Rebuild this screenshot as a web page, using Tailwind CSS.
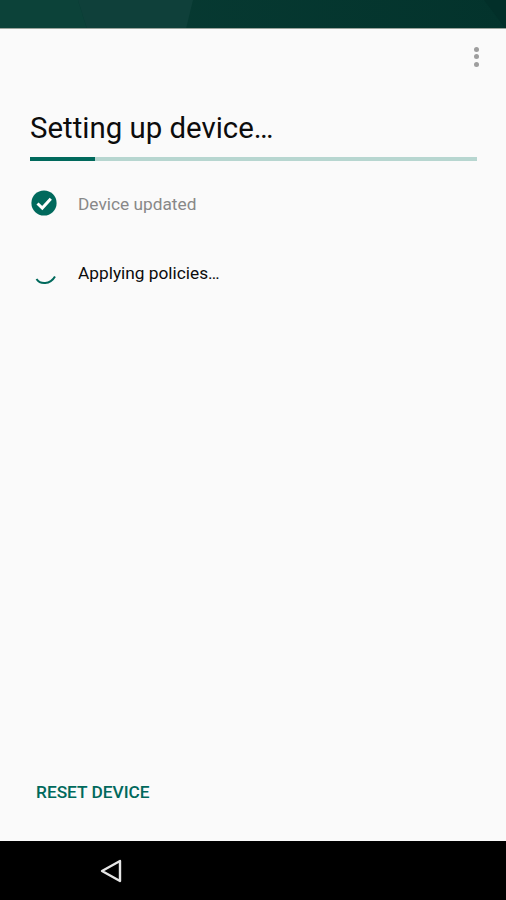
<!DOCTYPE html>
<html>
<head>
<meta charset="utf-8">
<script src="https://cdn.jsdelivr.net/npm/@tailwindcss/browser@4"></script>
</head>
<body class="m-0 bg-[#fafafa]">
<div class="w-[506px] h-[900px] flex flex-col font-['Roboto',sans-serif] overflow-hidden">
  <div class="h-[29px] shrink-0 relative overflow-hidden bg-[#063a33] border-b border-[#9aa39c]">
    <svg class="absolute inset-0" width="506" height="29" viewBox="0 0 506 29" preserveAspectRatio="none">
      <defs><linearGradient id="g" x1="0" x2="1" y1="0" y2="0"><stop offset="0" stop-color="#083c34"/><stop offset="1" stop-color="#03332c"/></linearGradient></defs>
      <rect width="506" height="29" fill="url(#g)"/>
      <polygon points="0,0 78,0 87,29 0,29" fill="#0c4239"/>
      <polygon points="78,0 193,0 186,29 87,29" fill="#0f403a"/>
      <polygon points="484,0 506,0 506,29" fill="#022f29"/>
    </svg>
  </div>
  <div class="flex-1 flex flex-col bg-[#fafafa] relative">
    <div class="absolute left-[474px] top-[18px] flex flex-col gap-[2.4px]">
      <span class="block w-[5px] h-[5px] rounded-full bg-[#9e9e9e]"></span>
      <span class="block w-[5px] h-[5px] rounded-full bg-[#9e9e9e]"></span>
      <span class="block w-[5px] h-[5px] rounded-full bg-[#9e9e9e]"></span>
    </div>
    <div class="pl-[30px] pr-[30px] pt-[81px]">
      <h1 class="text-[29.4px] leading-[36px] font-normal text-[#0c0c0c] m-0">Setting up device…</h1>
      <div class="mt-[11px] h-1 bg-[#b7d6d0] w-[447px]"><div class="h-1 w-[65px] bg-[#00695c]"></div></div>
    </div>
    <div class="pl-[30px] mt-[28px] flex items-center h-[28px]">
      <svg width="28" height="28" viewBox="0 0 28 28" class="shrink-0">
        <circle cx="14" cy="14" r="12.6" fill="#00695c"/>
        <path d="M7.5 14.5l4.8 4.6L20.8 9.8" fill="none" stroke="#fff" stroke-width="3"/>
      </svg>
      <span class="ml-[20px] mt-[2px] text-[17.3px] leading-[24px] text-[#888]">Device updated</span>
    </div>
    <div class="pl-[30px] mt-[44px] flex items-start h-[34px]">
      <svg width="28" height="28" viewBox="0 0 28 28" class="shrink-0 mt-[4px]">
        <path d="M6.5 14C10 19.5 20 20 25 11.5" fill="none" stroke="#00695c" stroke-width="2"/>
      </svg>
      <span class="ml-[20px] text-[17.3px] leading-[24px] text-[#0c0c0c]">Applying policies…</span>
    </div>
    <div class="mt-auto pl-[36px] pb-[37px] text-[17.3px] leading-[24px] font-medium text-[#00695c]">RESET DEVICE</div>
  </div>
  <div class="h-[59px] shrink-0 bg-black flex items-center pl-[100px]">
    <svg width="22" height="26" viewBox="0 0 22 26">
      <path d="M20 3 L2 13 L20 23 Z" fill="none" stroke="#e6e6e6" stroke-width="2.4" stroke-linejoin="round"/>
    </svg>
  </div>
</div>
</body>
</html>
